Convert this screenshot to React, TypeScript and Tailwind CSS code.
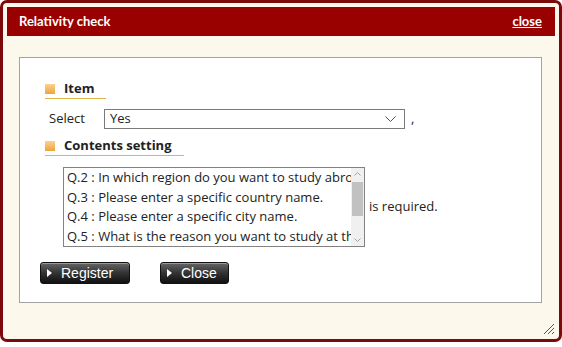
const questions = [
  "Q.2 : In which region do you want to study abroad?",
  "Q.3 : Please enter a specific country name.",
  "Q.4 : Please enter a specific city name.",
  "Q.5 : What is the reason you want to study at that place?",
];

function Heading({ label }: { label: string }) {
  return (
    <div className="ml-[5px] flex h-[20px] w-fit items-center border-b border-[#e2b54a] pr-[12px]">
      <span className="h-[10px] w-[10px] bg-gradient-to-b from-[#fbd28e] to-[#eea23a]" />
      <span className="ml-[9px] text-[13px] font-bold text-[#222]">{label}</span>
    </div>
  );
}

function DarkButton({ label, width }: { label: string; width: string }) {
  return (
    <button
      className={`flex h-[22px] ${width} items-center rounded-[3px] border border-[#111] bg-gradient-to-b from-[#666] via-[#333] to-[#111] pl-[6px] text-[14px] text-white shadow-[inset_0_1px_0_rgba(255,255,255,0.35)]`}
      style={{ fontFamily: '"Liberation Sans", Arial, sans-serif' }}
    >
      <svg width="5" height="8" viewBox="0 0 5 8" className="mr-[9px]">
        <path d="M0 0 L5 4 L0 8 Z" fill="#fff" />
      </svg>
      {label}
    </button>
  );
}

export default function App() {
  return (
    <div className="h-[347px] w-[562px] bg-white">
      <div className="relative flex h-[342px] flex-col rounded-[7px] border-[3px] border-[#7c0a0a] bg-[#fdf8ec] p-[4px]">
        <div
          className="flex h-[29px] items-center justify-between bg-[#990000] pl-[12px] pr-[13px] text-[13px] font-bold text-white"
          style={{ fontFamily: "Lato, 'Open Sans', sans-serif" }}
        >
          <span>Relativity check</span>
          <a className="cursor-pointer underline">close</a>
        </div>

        <div
          className="ml-[12px] mr-[13px] mt-[21px] flex h-[246px] flex-col border border-[#a3a3a3] bg-white pl-[20px] pt-[21px] text-[13px] text-[#222]"
          style={{ fontFamily: "'Open Sans', 'Noto Sans', sans-serif" }}
        >
          <Heading label="Item" />

          <div className="ml-[9px] mt-[10px] flex h-[20px] items-center">
            <span className="w-[55px]">Select</span>
            <div className="flex h-[20px] w-[301px] items-center justify-between border border-[#7a7a7a] bg-white pl-[5px] pr-[8px]">
              <span>Yes</span>
              <svg width="11" height="6" viewBox="0 0 11 6">
                <path d="M0.5 0.5 L5.5 5.5 L10.5 0.5" fill="none" stroke="#555" strokeWidth="1" />
              </svg>
            </div>
            <span className="ml-[6px]">,</span>
          </div>

          <div className="mt-[7px]">
            <Heading label="Contents setting" />
          </div>

          <div className="ml-[23px] mt-[11px] flex items-center">
            <div className="flex h-[80px] w-[302px] border border-[#828282] bg-white">
              <div className="flex-1 overflow-hidden pl-[3px] leading-[19.5px]">
                {questions.map((q) => (
                  <div key={q} className="whitespace-nowrap">
                    {q}
                  </div>
                ))}
              </div>
              <div className="flex w-[13px] flex-col items-center bg-[#f0f0f0]">
                <svg width="7" height="4" viewBox="0 0 7 4" className="mt-[4px]">
                  <path d="M0.5 3.5 L3.5 0.5 L6.5 3.5" fill="none" stroke="#a3a3a3" />
                </svg>
                <div className="mt-[6px] h-[34px] w-[11px] bg-[#c1c1c1]" />
                <div className="flex-1" />
                <svg width="7" height="4" viewBox="0 0 7 4" className="mb-[4px]">
                  <path d="M0.5 0.5 L3.5 3.5 L6.5 0.5" fill="none" stroke="#a3a3a3" />
                </svg>
              </div>
            </div>
            <span className="ml-[4px]">is required.</span>
          </div>

          <div className="mt-[15px] flex gap-[30px]">
            <DarkButton label="Register" width="w-[90px]" />
            <DarkButton label="Close" width="w-[69px]" />
          </div>
        </div>

        {/* resize grip */}
        <svg width="13" height="13" viewBox="0 0 13 13" className="absolute bottom-[4px] right-[4px]">
          <path d="M12 2 L2 12 M12 6 L6 12 M12 10 L10 12" stroke="#555" strokeWidth="1" />
        </svg>
      </div>
    </div>
  );
}
